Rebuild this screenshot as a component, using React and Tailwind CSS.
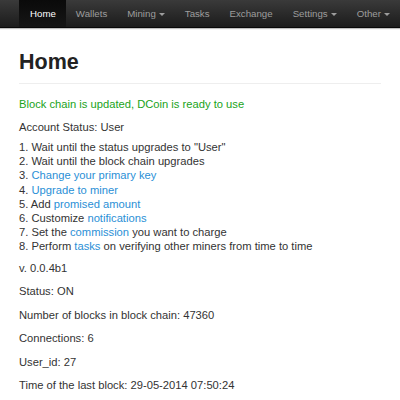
import React from "react";

const navItems = [
  { label: "Home", active: true },
  { label: "Wallets" },
  { label: "Mining", caret: true },
  { label: "Tasks" },
  { label: "Exchange" },
  { label: "Settings", caret: true },
  { label: "Other", caret: true },
];

function Caret() {
  return (
    <span className="ml-[3px] inline-block w-0 h-0 border-l-[3px] border-r-[3px] border-t-[3px] border-l-transparent border-r-transparent border-t-current align-middle"></span>
  );
}

function A({ children }) {
  return <a className="text-[#2a8fd6]">{children}</a>;
}

export default function App() {
  return (
    <div className="w-[400px] h-[400px] overflow-hidden bg-white text-[#333] text-[11.2px] font-['Liberation_Sans',Arial,sans-serif]">
      <nav className="h-[28px] flex pl-[19px] bg-gradient-to-b from-[#3a3a3a] to-[#1c1c1c] border-b border-[#080808] shadow-[0_1px_1px_rgba(0,0,0,0.25)] text-[9.7px]">
        {navItems.map((item) => (
          <div
            key={item.label}
            className={
              "px-[10px] leading-[28px] whitespace-nowrap " +
              (item.active
                ? "pl-[11px] text-white bg-gradient-to-b from-[#0a0a0a] to-[#161616]"
                : "text-[#9d9d9d]")
            }
          >
            {item.label}
            {item.caret && <Caret />}
          </div>
        ))}
      </nav>

      <div className="px-[19px]">
        <h1 className="mt-[21px] pb-[7px] border-b border-[#eee] text-[21.5px] leading-[27px] font-bold text-[#222]">
          Home
        </h1>

        <p className="mt-[13px] leading-[14px] text-[#1aa31a]">
          Block chain is updated, DCoin is ready to use
        </p>
        <p className="mt-[9px] leading-[14px]">Account Status: User</p>

        <div className="mt-[6px] leading-[14.2px]">
          <div>1. Wait until the status upgrades to "User"</div>
          <div>2. Wait until the block chain upgrades</div>
          <div>3. <A>Change your primary key</A></div>
          <div>4. <A>Upgrade to miner</A></div>
          <div>5. Add <A>promised amount</A></div>
          <div>6. Customize <A>notifications</A></div>
          <div>7. Set the <A>commission</A> you want to charge</div>
          <div>8. Perform <A>tasks</A> on verifying other miners from time to time</div>
        </div>

        <div className="mt-[7px] flex flex-col gap-[9.5px] leading-[14px]">
          <p>v. 0.0.4b1</p>
          <p>Status: ON</p>
          <p>Number of blocks in block chain: 47360</p>
          <p>Connections: 6</p>
          <p>User_id: 27</p>
          <p>Time of the last block: 29-05-2014 07:50:24</p>
        </div>
      </div>
    </div>
  );
}
